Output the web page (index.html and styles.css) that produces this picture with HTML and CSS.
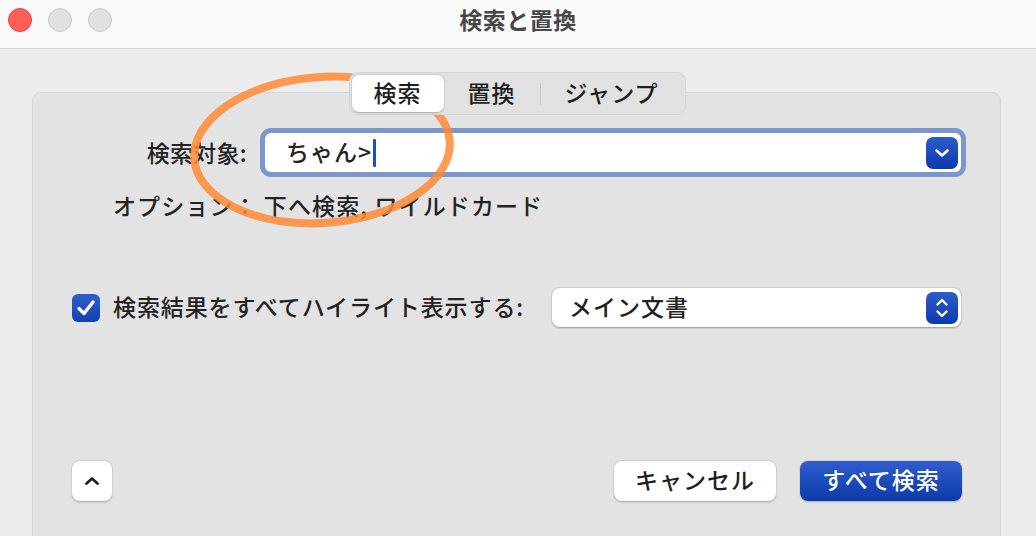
FILE: index.html
```html
<!DOCTYPE html>
<html lang="ja">

<head>
	<meta charset="UTF-8">
	<meta name="viewport" content="width=device-width, initial-scale=1.0">
	<title>検索と置換</title>
	<link rel="stylesheet" href="styles.css">
</head>

<body>
	<div class="window">

		<!-- Title bar -->
		<header class="titlebar">
			<div class="lights">
				<span class="light close"></span>
				<span class="light"></span>
				<span class="light"></span>
			</div>
			<h1 class="title">検索と置換</h1>
			<div></div>
		</header>

		<main class="content">
			<nav class="tabs">
				<button class="tab active">検索</button>
				<button class="tab">置換</button>
				<span class="tab-sep"></span>
				<button class="tab">ジャンプ</button>
			</nav>

			<section class="panel">
				<div class="find-row">
					<label class="find-label" for="query">検索対象:</label>
					<div class="combo">
						<span class="combo-text">ちゃん&gt;</span><span class="caret"></span>
						<span class="combo-btn">
							<svg width="16" height="10" viewBox="0 0 16 10">
								<path d="M2.5 2.5 L8 7.5 L13.5 2.5" fill="none" stroke="#fff" stroke-width="2.6" stroke-linecap="round" stroke-linejoin="round" />
							</svg>
						</span>
					</div>
				</div>

				<p class="options">オプション： 下へ検索, ワイルドカード</p>

				<div class="highlight-row">
					<span class="checkbox">
						<svg width="20" height="18" viewBox="0 0 20 18">
							<path d="M3 9.5 L8 14.5 L17 3" fill="none" stroke="#fff" stroke-width="3.4" stroke-linecap="round" stroke-linejoin="round" />
						</svg>
					</span>
					<span class="highlight-label">検索結果をすべてハイライト表示する:</span>
					<div class="popup">
						<span class="popup-text">メイン文書</span>
						<span class="stepper">
							<svg width="14" height="24" viewBox="0 0 14 24">
								<path d="M2.5 8.5 L7 4 L11.5 8.5 M2.5 15.5 L7 20 L11.5 15.5" fill="none" stroke="#fff" stroke-width="2.4" stroke-linecap="round" stroke-linejoin="round" />
							</svg>
						</span>
					</div>
				</div>

				<div class="footer">
					<button class="btn btn-small">
						<svg width="16" height="10" viewBox="0 0 16 10">
							<path d="M2.5 7.5 L8 2.5 L13.5 7.5" fill="none" stroke="#222" stroke-width="2.8" stroke-linecap="round" stroke-linejoin="round" />
						</svg>
					</button>
					<button class="btn btn-cancel">キャンセル</button>
					<button class="btn btn-primary">すべて検索</button>
				</div>
			</section>
		</main>

		<!-- hand drawn marker -->
		<svg class="annotation" width="1036" height="536" viewBox="0 0 1036 536">
			<ellipse cx="322" cy="150" rx="128" ry="73" transform="rotate(-4 322 150)" fill="none" stroke="#ff8935" stroke-opacity="0.85" stroke-width="8" />
		</svg>
	</div>
</body>

</html>
```

FILE: styles.css
```css
* {
	box-sizing: border-box;
}

body {
	margin: 0;
	width: 1036px;
	height: 536px;
	overflow: hidden;
	font-family: "Noto Sans CJK JP", "Noto Sans", sans-serif;
	color: #232323;
	background-color: #ececec;
}

button {
	font-family: inherit;
	border: none;
	padding: 0;
	cursor: pointer;
}

.window {
	position: relative;
	display: flex;
	flex-direction: column;
	height: 536px;
	overflow: hidden;
}

.titlebar {
	flex: none;
	display: grid;
	grid-template-columns: 1fr auto 1fr;
	align-items: center;
	height: 49px;
	background-color: #f9f9f9;
	border-bottom: 1px solid #d3d3d3;
	padding-bottom: 9px;
}

.lights {
	display: flex;
	gap: 16px;
	padding-left: 8px;
}

.light {
	width: 24px;
	height: 24px;
	border-radius: 50%;
	background-color: #e0e0e0;
	border: 1px solid #c9c9c9;
}

.light.close {
	background-color: #ff5f57;
	border-color: #e2463f;
}

.title {
	margin: 0;
	padding-bottom: 2px;
	font-size: 23px;
	font-weight: 700;
	line-height: 30px;
	color: #474747;
	letter-spacing: 0.5px;
}

.content {
	flex: none;
	display: flex;
	flex-direction: column;
	padding: 23px 35px 0 32px;
}

/* segmented control */
.tabs {
	position: relative;
	z-index: 1;
	align-self: center;
	display: flex;
	align-items: center;
	height: 43px;
	margin-left: 1px;
	margin-bottom: -23px;
	padding: 2px;
	background-color: #e1e1e1;
	border: 1px solid #d5d5d5;
	border-radius: 9px;
}

.tab {
	height: 37px;
	padding: 0 20px 2px;
	font-size: 23px;
	font-weight: 500;
	line-height: 35px;
	color: #1f1f1f;
	background: transparent;
	border-radius: 7px;
	letter-spacing: 1px;
}

.tab.active {
	width: 92px;
	background-color: #fff;
	box-shadow: 0 0.5px 2px rgba(0, 0, 0, 0.25);
}

.tab:nth-child(2) {
	width: 96px;
}

.tab:last-child {
	width: 142px;
}

.tab-sep {
	width: 1px;
	height: 22px;
	background-color: #c6c6c6;
}

.panel {
	height: 470px;
	background-color: #e3e3e3;
	border: 1px solid #d7d7d7;
	border-radius: 9px;
}

.find-row {
	display: flex;
	align-items: center;
	margin-top: 40px;
	height: 39px;
}

.find-label {
	width: 214px;
	padding-bottom: 2px;
	text-align: right;
	font-size: 23px;
	font-weight: 500;
	line-height: 30px;
	margin-right: 18px;
	letter-spacing: 0.3px;
}

.combo {
	display: flex;
	align-items: center;
	width: 696px;
	height: 39px;
	padding: 0 3px 0 21px;
	background-color: #fff;
	border-radius: 6px;
	box-shadow: 0 0 0 5px #7c97cd;
}

.combo-text {
	padding-bottom: 3px;
	font-size: 23px;
	font-weight: 500;
	line-height: 30px;
	letter-spacing: 1px;
}

.caret {
	width: 3px;
	height: 28px;
	margin-left: 1px;
	background-color: #1d4fc4;
	border-radius: 1px;
}

.combo-btn,
.stepper {
	display: flex;
	align-items: center;
	justify-content: center;
	width: 32px;
	height: 32px;
	margin-left: auto;
	border-radius: 7px;
	background: linear-gradient(#2d5ccd, #0d3aab);
}

.options {
	margin: 18px 0 0 80px;
	font-size: 23px;
	font-weight: 500;
	line-height: 30px;
	letter-spacing: 1.1px;
}

.highlight-row {
	display: flex;
	align-items: center;
	height: 39px;
	margin-top: 68px;
	padding: 0 39px 0 39px;
}

.checkbox {
	display: flex;
	align-items: center;
	justify-content: center;
	width: 28px;
	height: 28px;
	border-radius: 6px;
	background: linear-gradient(#2f5ed0, #1240ae);
}

.highlight-label {
	margin-left: 13px;
	padding-bottom: 4px;
	font-size: 23px;
	font-weight: 500;
	line-height: 30px;
	letter-spacing: 0.9px;
}

.popup {
	display: flex;
	align-items: center;
	width: 409px;
	height: 39px;
	margin-left: auto;
	padding: 0 3px 0 17px;
	font-size: 23px;
	font-weight: 500;
	line-height: 30px;
	letter-spacing: 1px;
	background-color: #fff;
	border-radius: 8px;
	box-shadow: 0 0.5px 2px rgba(0, 0, 0, 0.35);
}

.popup-text {
	padding-bottom: 4px;
}

.footer {
	display: flex;
	align-items: center;
	gap: 24px;
	margin-top: 134px;
	padding: 0 38px 0 39px;
}

.btn {
	height: 40px;
	padding-bottom: 4px;
	font-size: 23px;
	font-weight: 500;
	line-height: 36px;
	border-radius: 8px;
	letter-spacing: 1px;
}

.btn-small {
	display: flex;
	align-items: center;
	justify-content: center;
	width: 40px;
	padding-bottom: 1px;
	margin-right: auto;
	background-color: #fff;
	box-shadow: 0 0.5px 2px rgba(0, 0, 0, 0.3);
}

.btn-cancel {
	width: 162px;
	color: #1f1f1f;
	background-color: #fff;
	box-shadow: 0 0.5px 2px rgba(0, 0, 0, 0.3);
}

.btn-primary {
	width: 162px;
	color: #fff;
	background: linear-gradient(#2f5dcc, #0c3aa9);
	box-shadow: 0 0.5px 2px rgba(0, 0, 0, 0.25);
}

.annotation {
	position: absolute;
	top: 0;
	left: 0;
	pointer-events: none;
}
```
